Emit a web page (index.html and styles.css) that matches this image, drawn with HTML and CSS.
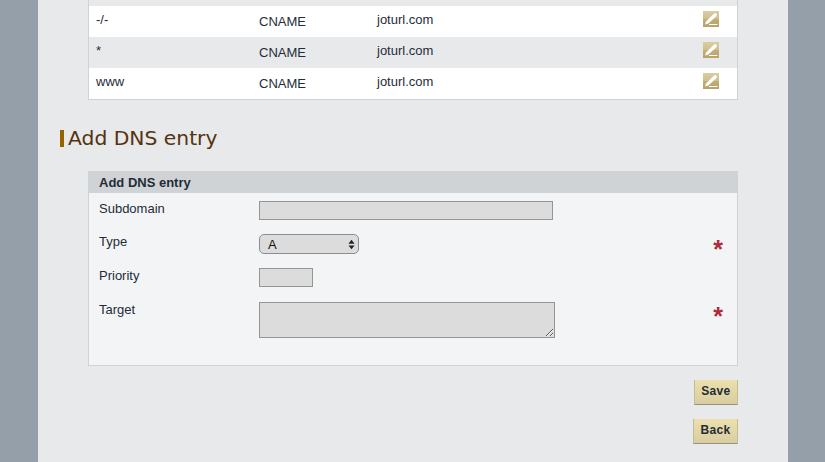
FILE: index.html
```html
<!DOCTYPE html>
<html lang="en">
<head>
    <meta charset="UTF-8">
    <meta name="viewport" content="width=device-width, initial-scale=1.0">
    <title>Add DNS entry</title>
    <link rel="stylesheet" href="styles.css">
</head>
<body>

    <div id="content">
        <table class="dns-table">
            <colgroup>
                <col class="col-name">
                <col class="col-type">
                <col class="col-target">
                <col class="col-edit">
            </colgroup>
            <tr class="sliver"><td colspan="4"></td></tr>
            <tr>
                <td class="cell-name">-/-</td>
                <td class="cell-type">CNAME</td>
                <td class="cell-target">joturl.com</td>
                <td>
                    <svg class="edit-icon" viewBox="0 0 16 16"><use href="#pencil"/></svg>
                </td>
            </tr>
            <tr class="alt">
                <td class="cell-name">*</td>
                <td class="cell-type">CNAME</td>
                <td class="cell-target">joturl.com</td>
                <td>
                    <svg class="edit-icon" viewBox="0 0 16 16"><use href="#pencil"/></svg>
                </td>
            </tr>
            <tr>
                <td class="cell-name">www</td>
                <td class="cell-type">CNAME</td>
                <td class="cell-target">joturl.com</td>
                <td>
                    <svg class="edit-icon" viewBox="0 0 16 16"><use href="#pencil"/></svg>
                </td>
            </tr>
        </table>

        <h1 class="page-title">Add DNS entry</h1>

        <form class="dns-form">
            <h2>Add DNS entry</h2>
            <div class="form-body">
                <div class="form-row row-subdomain">
                    <label>Subdomain</label>
                    <input type="text" class="input-subdomain">
                </div>
                <div class="form-row row-type">
                    <label>Type</label>
                    <div class="fake-select">
                        <span>A</span>
                        <svg class="select-arrows" viewBox="0 0 8 12">
                            <path d="M4 0.5 7.5 5 H0.5Z M4 11.5 0.5 7 H7.5Z"/>
                        </svg>
                    </div>
                    <span class="required">*</span>
                </div>
                <div class="form-row row-priority">
                    <label>Priority</label>
                    <input type="text" class="input-priority">
                </div>
                <div class="form-row row-target">
                    <label>Target</label>
                    <textarea class="input-target"></textarea>
                    <span class="required">*</span>
                </div>
            </div>
        </form>

        <div class="actions">
            <button type="button" class="btn">Save</button>
            <button type="button" class="btn">Back</button>
        </div>
    </div>

    <svg class="icon-defs" width="0" height="0">
        <defs>
            <linearGradient id="edit-bg" x1="0" y1="0" x2="0" y2="1">
                <stop offset="0" stop-color="#dacca5"/>
                <stop offset="0.5" stop-color="#cfbe8e"/>
                <stop offset="0.5" stop-color="#c3ae76"/>
                <stop offset="1" stop-color="#b8a266"/>
            </linearGradient>
            <g id="pencil">
                <rect width="16" height="16" fill="url(#edit-bg)"/>
                <path d="M2 13.6 3 10.4 10.8 2.8 12.6 2 14 3.4 13.2 5.2 5.4 12.6Z" fill="#fff"/>
                <rect x="6" y="13" width="8.4" height="1" fill="#fff"/>
            </g>
        </defs>
    </svg>

</body>
</html>
```

FILE: styles.css
```css
html, body {
    margin: 0;
    height: 100%;
}

body {
    font-family: "Liberation Sans", Arial, sans-serif;
    font-size: 13px;
    color: #1e2d38;
    background-color: #949fa9;
    overflow: hidden;
}

#content {
    box-sizing: border-box;
    width: 750px;
    height: 462px;
    margin-left: 38px;
    padding: 0 50px;
    background-color: #e8e9eb;
}

.icon-defs {
    position: absolute;
}

/* table of existing entries */
.dns-table {
    width: 650px;
    border-collapse: separate;
    border-spacing: 0;
    table-layout: fixed;
    background-color: #fff;
    border: 1px solid #d0d3d6;
    border-top: none;
}

.col-name {
    width: 170px;
}

.col-type {
    width: 118px;
}

.col-target {
    width: 326px;
}

.col-edit {
    width: 34px;
}

.dns-table td {
    height: 31px;
    padding: 0;
    vertical-align: top;
}

.dns-table .sliver td {
    height: 6px;
    background-color: #e8e9eb;
}

.dns-table .alt td {
    background-color: #e8e9eb;
}

.dns-table .cell-name {
    padding-left: 7px;
    line-height: 27px;
}

.cell-type {
    line-height: 31px;
}

.cell-target {
    line-height: 27px;
}

.edit-icon {
    display: block;
    width: 16px;
    height: 16px;
    margin-top: 5px;
}

.page-title {
    display: flex;
    align-items: center;
    height: 17px;
    margin: 30px 0 24px -28px;
    padding-left: 4px;
    border-left: 4px solid #966300;
    font-family: "DejaVu Sans", Verdana, sans-serif;
    font-size: 20.3px;
    font-weight: normal;
    line-height: 17px;
    color: #54340f;
}

/* add form */
.dns-form {
    border: 1px solid #d0d3d6;
    border-top: none;
    background-color: #f3f4f6;
}

.dns-form h2 {
    height: 22px;
    margin: 0;
    padding-left: 10px;
    font-size: 13px;
    line-height: 24px;
    background-color: #d0d3d6;
    color: #1e2d38;
}

.form-body {
    height: 172px;
}

.form-row {
    display: flex;
    align-items: flex-start;
    position: relative;
}

.form-row label {
    width: 170px;
    padding-left: 10px;
    box-sizing: border-box;
    line-height: 15px;
}

.row-subdomain {
    height: 34px;
    padding-top: 8px;
    box-sizing: border-box;
}

.row-type {
    height: 33px;
    padding-top: 7px;
    box-sizing: border-box;
}

.row-priority {
    height: 34px;
    padding-top: 8px;
    box-sizing: border-box;
}

.row-target {
    padding-top: 8px;
}

input, textarea {
    box-sizing: border-box;
    margin: 0;
    padding: 0;
    border: 1px solid #959595;
    background-color: #dcdcdc;
    display: block;
}

.input-subdomain {
    width: 294px;
    height: 19px;
}

.input-priority {
    width: 54px;
    height: 19px;
}

.input-target {
    width: 296px;
    height: 36px;
}

.fake-select {
    box-sizing: border-box;
    display: flex;
    align-items: center;
    justify-content: space-between;
    width: 100px;
    height: 20px;
    padding: 0 3px 0 8px;
    border: 1px solid #8e8e8e;
    border-radius: 5px;
    background-color: #dcdcdc;
    color: #111;
}

.select-arrows {
    width: 7px;
    height: 11px;
    fill: #222;
}

.required {
    position: absolute;
    right: 14px;
    top: 10px;
    font-size: 25px;
    font-weight: bold;
    line-height: 25px;
    color: #b02a3c;
}

/* buttons */
.actions {
    display: flex;
    flex-direction: column;
    align-items: flex-end;
    gap: 14px;
    margin-top: 14px;
}

.btn {
    height: 25px;
    padding: 0 6.5px 2px;
    border: none;
    border-bottom: 1px solid #9c9176;
    border-right: 1px solid #c9bb90;
    border-left: 1px solid #c9bb90;
    background: linear-gradient(#ecdfb0, #e2d5a4 60%, #d8cca4);
    font-family: "Liberation Sans", Arial, sans-serif;
    font-size: 12px;
    font-weight: bold;
    letter-spacing: 0.3px;
    color: #1e2d38;
}
```
